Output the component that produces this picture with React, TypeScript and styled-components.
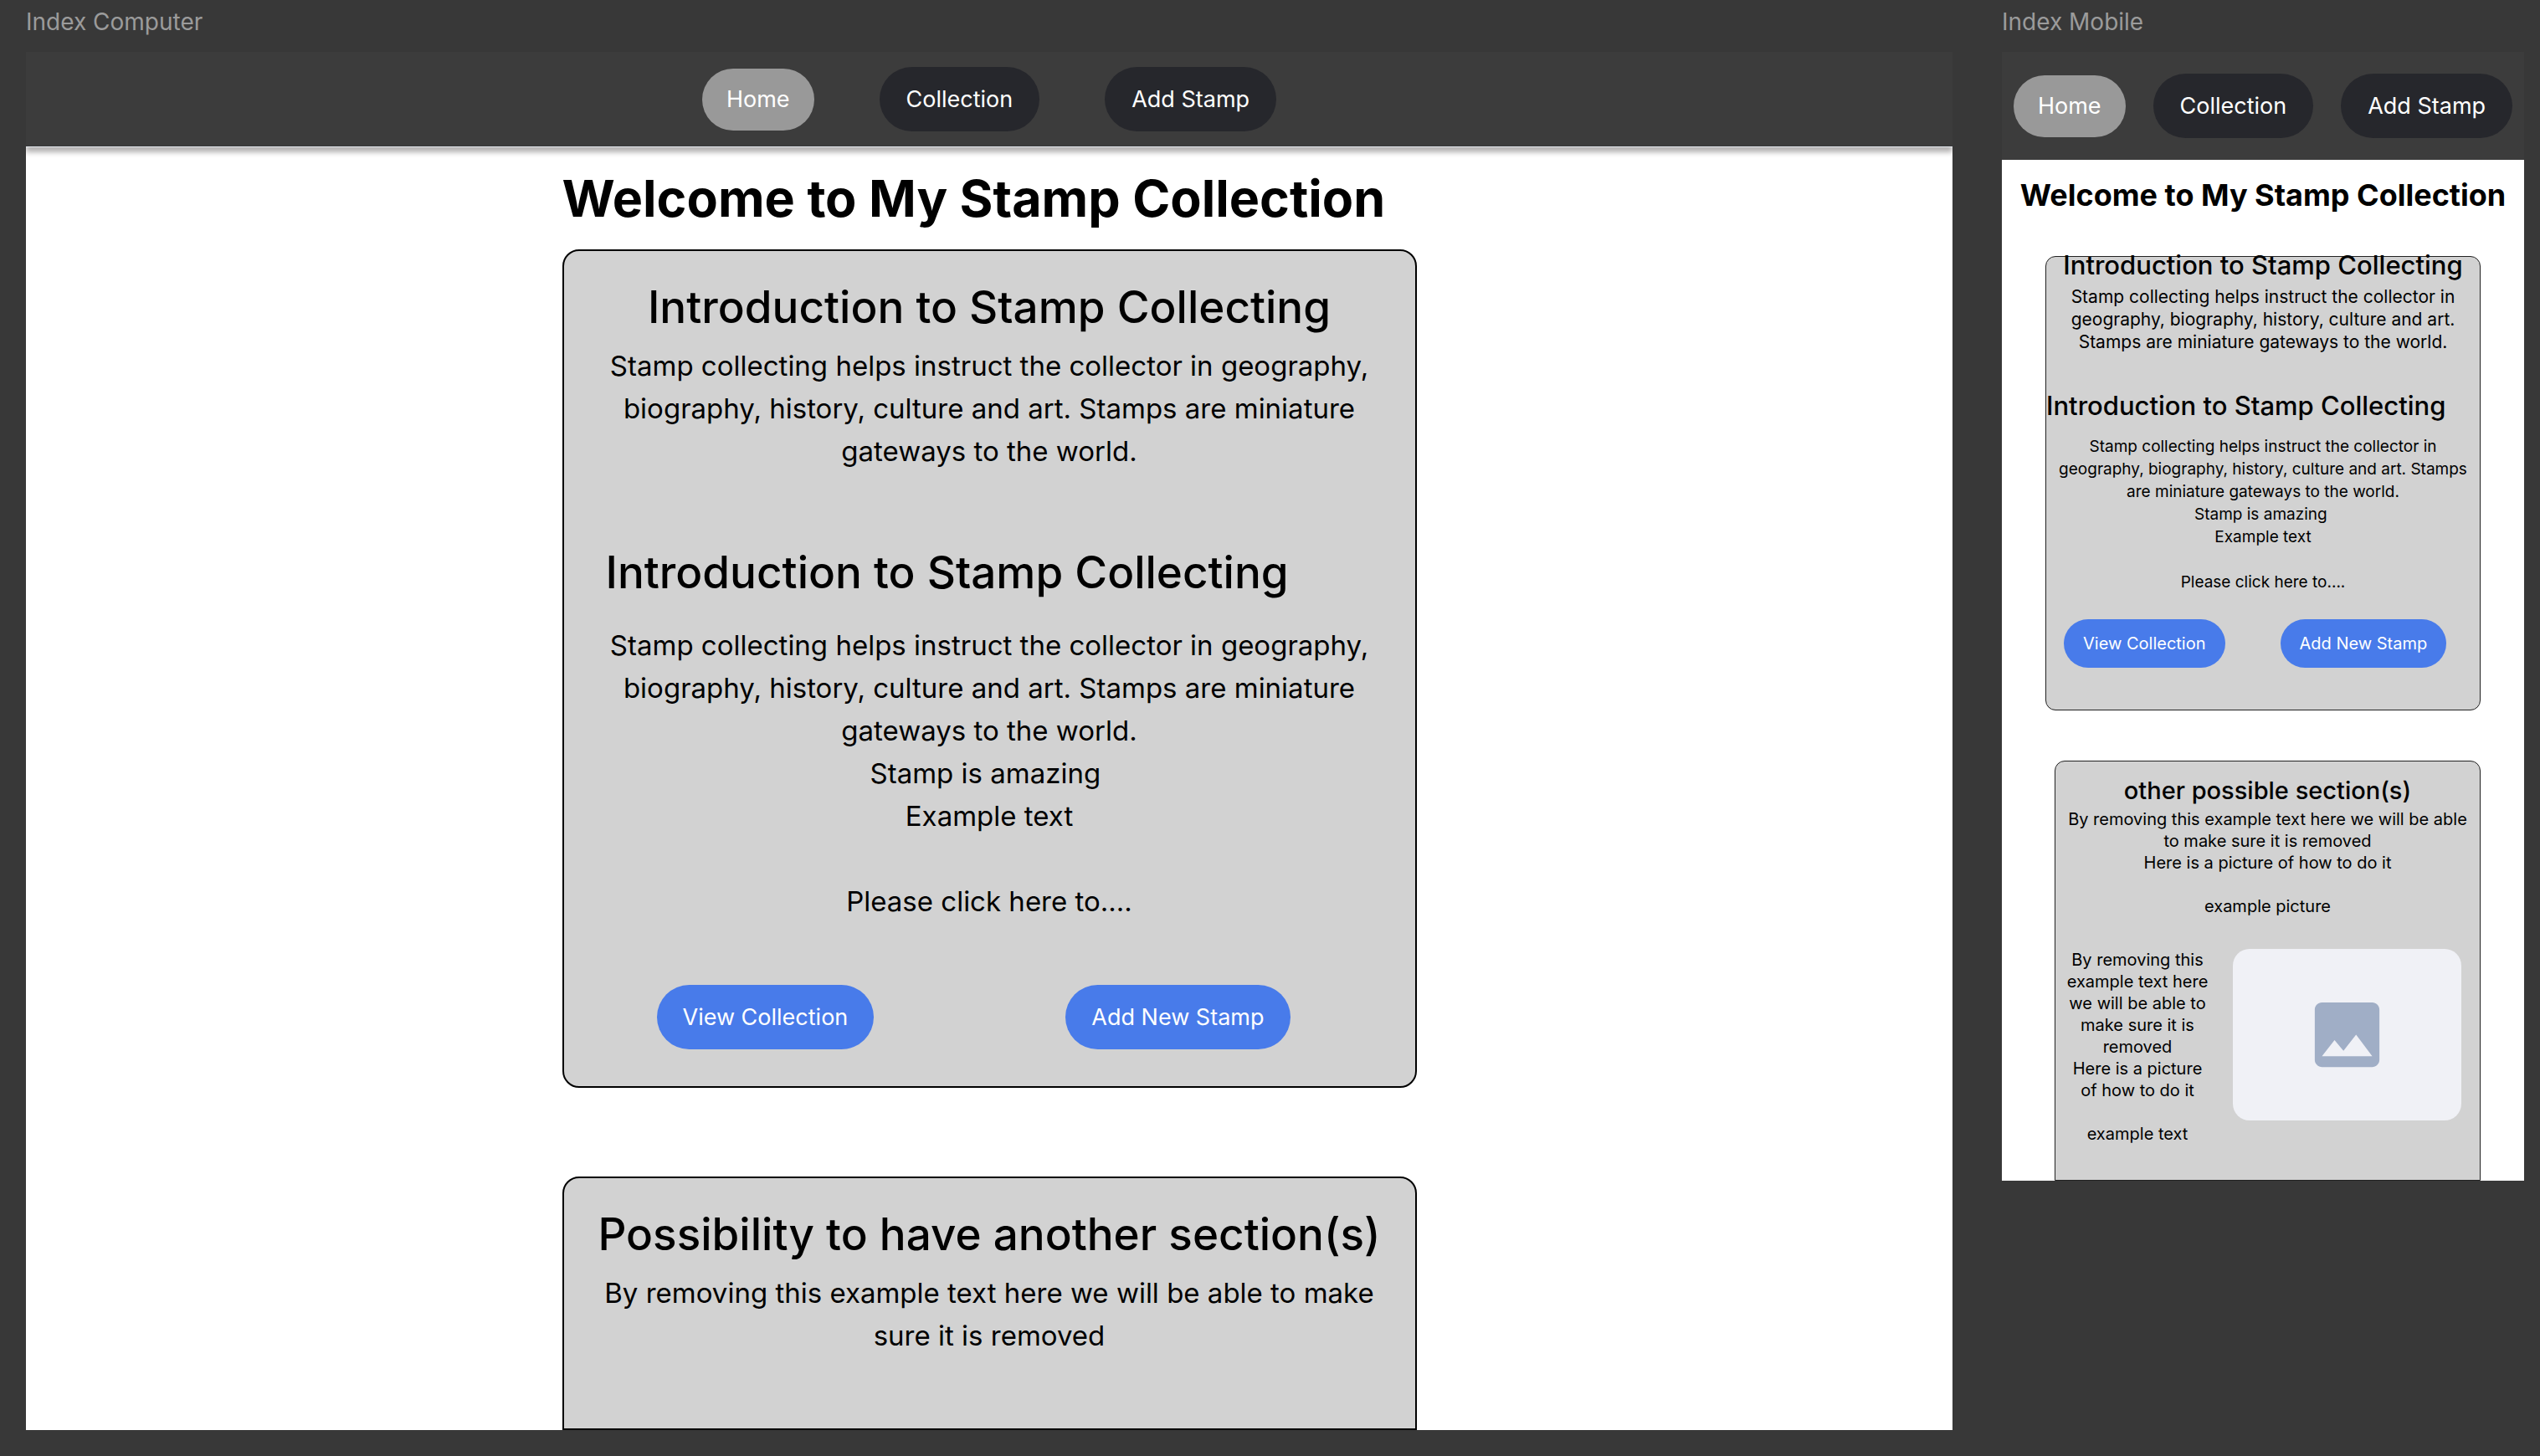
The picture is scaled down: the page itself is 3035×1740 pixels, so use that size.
import React from "react";
import styled, { createGlobalStyle } from "styled-components";

const GlobalStyle = createGlobalStyle`
  *, *::before, *::after { box-sizing: border-box; }
  body {
    margin: 0;
    background: #383838;
    color: #000;
    font-family: Inter, "Liberation Sans", sans-serif;
  }
  h1, h2, p { margin: 0; }
`;

const Canvas = styled.div`
  display: grid;
  grid-template-columns: minmax(0, 1fr) 624px;
  column-gap: 59px;
  align-items: start;
  padding: 0 19px 31px 31px;
`;

const FrameLabel = styled.div`
  height: 62px;
  padding-top: 10px;
  font-size: 28px;
  line-height: 32px;
  color: #9b9b9b;
`;

const Frame = styled.section`
  background: #fff;
`;

const NavBar = styled.nav<{ $compact?: boolean }>`
  position: relative;
  display: flex;
  align-items: center;
  justify-content: center;
  gap: ${(p) => (p.$compact ? 33 : 78)}px;
  height: ${(p) => (p.$compact ? 129 : 113)}px;
  background: #3c3c3c;
  box-shadow: ${(p) => (p.$compact ? "none" : "0 1px 0 #e8ecf2, 0 7px 6px #b4b2b2")};
  clip-path: inset(0 0 -16px 0);
`;

const NavLink = styled.a<{ $active?: boolean }>`
  display: flex;
  align-items: center;
  justify-content: center;
  height: ${(p) => (p.$active ? 74 : 77)}px;
  padding: 0 ${(p) => (p.$active ? 29 : 32)}px;
  border-radius: 39px;
  background: ${(p) => (p.$active ? "#999" : "#26272c")};
  color: #fff;
  font-size: 27px;
  line-height: 32px;
  white-space: nowrap;
  text-decoration: none;
`;

const Title = styled.h1<{ $compact?: boolean }>`
  max-width: 1021px;
  margin: 0 auto;
  padding-top: ${(p) => (p.$compact ? 18 : 22)}px;
  font-size: ${(p) => (p.$compact ? 36 : 61)}px;
  line-height: ${(p) => (p.$compact ? 48 : 80)}px;
  font-weight: 700;
  text-align: ${(p) => (p.$compact ? "center" : "left")};
  white-space: nowrap;
`;

const WideColumn = styled.main`
  display: flex;
  flex-direction: column;
  gap: 106px;
  max-width: 1021px;
  margin: 21px auto 0;
`;

const WideCard = styled.article<{ $cut?: boolean }>`
  padding: 33px 40px ${(p) => (p.$cut ? 85 : 44)}px;
  border: 2px solid #000;
  border-radius: ${(p) => (p.$cut ? "20px 20px 0 0" : "20px")};
  background: #d2d2d2;
`;

const WideHeading = styled.h2<{ $sub?: boolean }>`
  margin: ${(p) => (p.$sub ? "85px 0 28px 10px" : "0 0 11px")};
  font-size: 53px;
  line-height: 68px;
  font-weight: 500;
  text-align: ${(p) => (p.$sub ? "left" : "center")};
  white-space: nowrap;
`;

const WideText = styled.p`
  font-size: 33px;
  line-height: 51px;
  text-align: center;
`;

const Actions = styled.div<{ $compact?: boolean }>`
  display: flex;
  gap: ${(p) => (p.$compact ? 66 : 229)}px;
  margin-top: ${(p) => (p.$compact ? 31 : 74)}px;
  padding-left: ${(p) => (p.$compact ? 21 : 71)}px;
`;

const ActionButton = styled.button<{ $compact?: boolean }>`
  height: ${(p) => (p.$compact ? 58 : 77)}px;
  padding: 0 ${(p) => (p.$compact ? 23 : 31)}px;
  border: 0;
  border-radius: 39px;
  background: #487bea;
  color: #fff;
  font-family: inherit;
  font-size: ${(p) => (p.$compact ? 20 : 27)}px;
  line-height: 32px;
  white-space: nowrap;
`;

const SmallColumn = styled.main`
  display: flex;
  flex-direction: column;
  gap: 60px;
  padding: 49px 52px 0;
`;

const SmallCard = styled.article<{ $cut?: boolean }>`
  margin-left: ${(p) => (p.$cut ? 11 : 0)}px;
  padding: ${(p) => (p.$cut ? "25px 0 42px" : "0 0 50px")};
  border: 1px solid #222;
  border-radius: ${(p) => (p.$cut ? "12px 12px 0 0" : "12px")};
  background: #d2d2d2;
`;

const SmallHeading = styled.h2<{ $sub?: boolean; $size: number }>`
  margin: ${(p) => (p.$sub ? "53px 0 25px" : "0")};
  font-size: ${(p) => p.$size}px;
  line-height: 20px;
  font-weight: 500;
  text-align: ${(p) => (p.$sub ? "left" : "center")};
  white-space: nowrap;
`;

const SmallText = styled.p<{ $size: number; $line: number; $top?: number }>`
  margin-top: ${(p) => p.$top ?? 0}px;
  padding: 0 4px;
  font-size: ${(p) => p.$size}px;
  line-height: ${(p) => p.$line}px;
  text-align: center;
`;

const MediaRow = styled.div`
  display: grid;
  grid-template-columns: minmax(0, 1fr) 273px;
  column-gap: 24px;
  align-items: start;
  margin-top: 38px;
  padding: 0 22px 0 8px;
`;

const Placeholder = styled.div`
  display: flex;
  align-items: center;
  justify-content: center;
  height: 205px;
  border-radius: 20px;
  background: #f0f1f6;
`;

const PictureIcon = () => (
  <svg width="103" height="103" viewBox="0 0 24 24" role="img" aria-label="Picture">
    <path
      fill="#a0aec6"
      d="M21 19V5c0-1.1-.9-2-2-2H5c-1.1 0-2 .9-2 2v14c0 1.1.9 2 2 2h14c1.1 0 2-.9 2-2zM8.5 13.5l2.5 3.01L14.5 12l4.5 6H5l3.5-4.5z"
    />
  </svg>
);

const navItems = [
  { label: "Home", active: true },
  { label: "Collection" },
  { label: "Add Stamp" },
];

const Navigation = ({ compact }: { compact?: boolean }) => (
  <NavBar $compact={compact}>
    {navItems.map((item) => (
      <NavLink key={item.label} href="#" $active={item.active}>
        {item.label}
      </NavLink>
    ))}
  </NavBar>
);

const intro =
  "Stamp collecting helps instruct the collector in geography, biography, history, culture and art. Stamps are miniature gateways to the world.";

const IntroDetails = () => (
  <>
    {intro}
    <br />
    Stamp is amazing{"\u00a0"}
    <br />
    Example text
    <br />
    <br />
    Please click here to....
  </>
);

const ActionRow = ({ compact }: { compact?: boolean }) => (
  <Actions $compact={compact}>
    <ActionButton type="button" $compact={compact}>View Collection</ActionButton>
    <ActionButton type="button" $compact={compact}>Add New Stamp</ActionButton>
  </Actions>
);

export default function App() {
  return (
    <>
      <GlobalStyle />
      <Canvas>
        <div>
          <FrameLabel>Index Computer</FrameLabel>
          <Frame>
            <Navigation />
            <Title>Welcome to My Stamp Collection</Title>
            <WideColumn>
              <WideCard>
                <WideHeading>Introduction to Stamp Collecting</WideHeading>
                <WideText>{intro}</WideText>
                <WideHeading $sub>Introduction to Stamp Collecting</WideHeading>
                <WideText>
                  <IntroDetails />
                </WideText>
                <ActionRow />
              </WideCard>
              <WideCard $cut>
                <WideHeading>Possibility to have another section(s)</WideHeading>
                <WideText>By removing this example text here we will be able to make sure it is removed</WideText>
              </WideCard>
            </WideColumn>
          </Frame>
        </div>
        <div>
          <FrameLabel>Index Mobile</FrameLabel>
          <Frame>
            <Navigation compact />
            <Title $compact>Welcome to My Stamp Collection</Title>
            <SmallColumn>
              <SmallCard>
                <SmallHeading $size={31}>Introduction to Stamp Collecting</SmallHeading>
                <SmallText $size={21} $line={27} $top={14}>{intro}</SmallText>
                <SmallHeading $size={31} $sub>Introduction to Stamp Collecting</SmallHeading>
                <SmallText $size={19} $line={27}>
                  <IntroDetails />
                </SmallText>
                <ActionRow compact />
              </SmallCard>
              <SmallCard $cut>
                <SmallHeading $size={29}>other possible section(s)</SmallHeading>
                <SmallText $size={20} $line={26} $top={11}>
                  By removing this example text here we will be able to make sure it is removed
                  <br />
                  Here is a picture of how to do it
                  <br />
                  <br />
                  example picture
                </SmallText>
                <MediaRow>
                  <SmallText $size={20} $line={26}>
                    By removing this example text here we will be able to make sure it is removed
                    <br />
                    Here is a picture of how to do it
                    <br />
                    <br />
                    example text
                  </SmallText>
                  <Placeholder>
                    <PictureIcon />
                  </Placeholder>
                </MediaRow>
              </SmallCard>
            </SmallColumn>
          </Frame>
        </div>
      </Canvas>
    </>
  );
}
